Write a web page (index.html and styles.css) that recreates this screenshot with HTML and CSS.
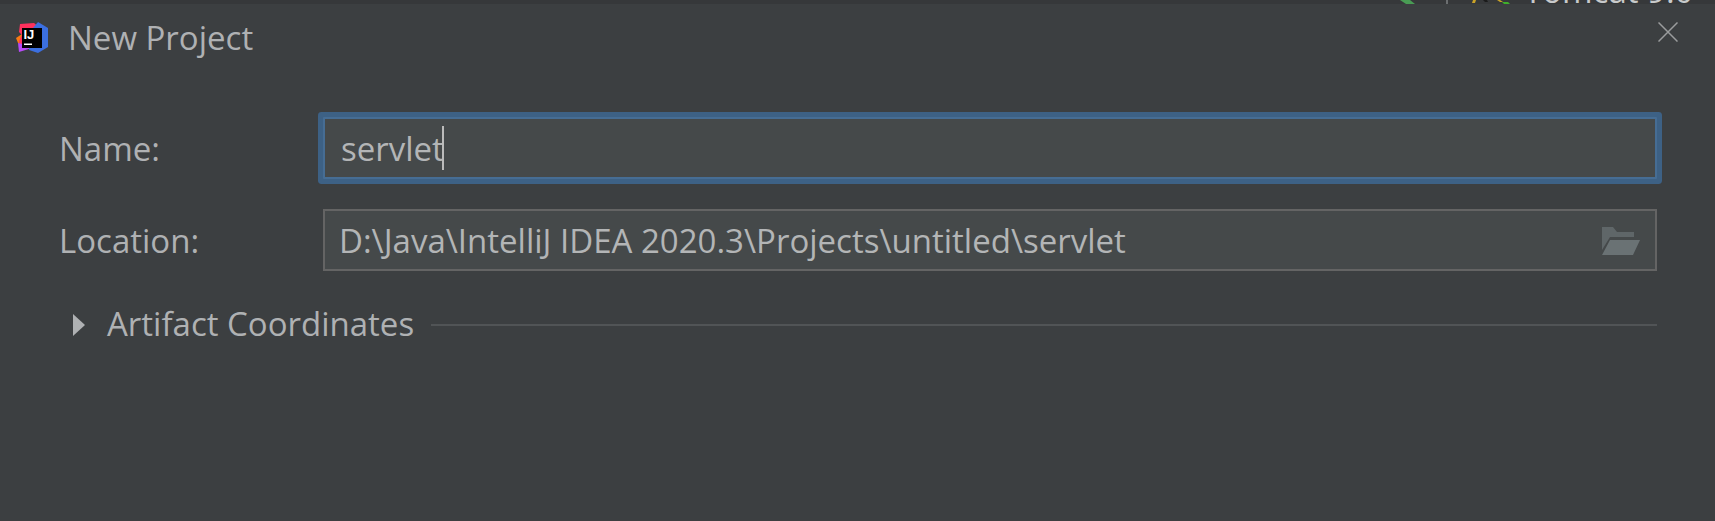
FILE: index.html
```html
<!DOCTYPE html>
<html lang="en">
<head>
    <meta charset="UTF-8">
    <title>New Project</title>
    <link rel="stylesheet" href="styles.css">
</head>
<body>
    <div class="behind">
        <svg class="behind-icons" width="120" height="4" viewBox="0 0 120 4">
            <path d="M0 0h10l5 4H6z" fill="#499c54"/>
            <rect x="46" y="0" width="2" height="4" fill="#6b6e70"/>
            <path d="M73 0h3l-1 3h-3z" fill="#c9a227"/>
            <path d="M83 0h4l1 2h-3z" fill="#1b1b1b"/>
            <path d="M97 0h3l3 2h-3z" fill="#c9a227"/>
            <path d="M102 2h6l2 2h-6z" fill="#3fae2a"/>
        </svg>
        <span class="behind-text">Tomcat 9.0</span>
    </div>
    <div class="dialog">
        <div class="title-bar">
            <svg class="logo" width="32" height="32" viewBox="0 0 32 32">
                <path d="M0 16l6-4v10l-4-1z" fill="#f97a12"/>
                <path d="M4 2l14-1 6 5-8 18-12 3-1-8 3-6-3-3z" fill="#fe315d"/>
                <path d="M3 30l-1-9 9 2 5 3z" fill="#b74af7"/>
                <path d="M22 0l10 6v19l-10 6-9-3 4-22z" fill="#3b6fe0"/>
                <rect x="6" y="6" width="20" height="20" fill="#000"/>
                <rect x="8" y="21.500" width="8" height="1.500" fill="#fff"/>
                <text class="logo-text" x="7.500" y="17">IJ</text>
            </svg>
            <span class="title">New Project</span>
            <svg class="close" width="20" height="20" viewBox="0 0 20 20">
                <path d="M.5.500l19 19M19.500.500l-19 19" stroke="#9a9c9d" stroke-width="1.500" fill="none"/>
            </svg>
        </div>
        <div class="form">
            <div class="form-row">
                <label class="form-label">Name:</label>
                <div class="field field-focus">
                    <span class="field-text">servlet</span><span class="caret"></span>
                </div>
            </div>
            <div class="form-row">
                <label class="form-label">Location:</label>
                <div class="field">
                    <span class="field-text">D:\Java\IntelliJ IDEA 2020.3\Projects\untitled\servlet</span>
                    <svg class="folder" width="38" height="28" viewBox="0 0 38 28">
                        <path d="M0 0h11l4 5h17v5H8L0 23z" fill="#5f6668"/>
                        <path d="M8 13h30l-7 15H0z" fill="#6a7274"/>
                    </svg>
                </div>
            </div>
            <div class="artifact">
                <span class="arrow"></span>
                <span class="artifact-title">Artifact Coordinates</span>
                <span class="artifact-line"></span>
            </div>
        </div>
    </div>
</body>
</html>
```

FILE: styles.css
```css
html, body {
    margin: 0;
    padding: 0;
    height: 521px;
    overflow: hidden;
}
body {
    font-family: "Open Sans", "Noto Sans", sans-serif;
    background-color: #3c3f41;
    color: #afb1b3;
    display: flex;
    flex-direction: column;
}
.behind {
    height: 4px;
    flex-shrink: 0;
    background-color: #36383a;
    display: flex;
    overflow: hidden;
    padding-left: 1400px;
    position: relative;
}
.behind-icons {
    flex-shrink: 0;
}
.behind-text {
    position: absolute;
    left: 1524px;
    top: -26px;
    font-size: 33px;
    line-height: 34px;
    color: #c8cacb;
}
.dialog {
    flex: 1;
    display: flex;
    flex-direction: column;
}
.title-bar {
    display: flex;
    align-items: center;
    height: 68px;
    padding: 0 37px 0 16px;
}
.logo {
    flex-shrink: 0;
    margin-right: 20px;
}
.logo-text {
    font-family: "Liberation Sans", sans-serif;
    font-size: 13px;
    font-weight: 700;
    fill: #fff;
}
.title {
    font-size: 33px;
    line-height: 68px;
    flex: 1;
}
.close {
    flex-shrink: 0;
    margin-top: -12px;
}
.form {
    padding: 45px 58px 0 59px;
    display: flex;
    flex-direction: column;
    gap: 30px;
}
.form-row {
    display: flex;
    align-items: center;
}
.form-label {
    width: 264px;
    flex-shrink: 0;
    font-size: 33px;
}
.field {
    flex: 1;
    height: 62px;
    box-sizing: border-box;
    border: 2px solid #646464;
    background-color: #45494a;
    display: flex;
    align-items: center;
    padding-left: 14px;
    font-size: 33px;
    position: relative;
}
.field-focus {
    border-color: #466d94;
    border-radius: 1px;
    box-shadow: 0 0 0 5px #3d6185;
    padding-left: 16px;
}
.field-text {
    color: #b3b5b6;
}
.caret {
    display: block;
    width: 2px;
    height: 44px;
    background-color: #bbbbbb;
    margin-left: -2px;
}
.folder {
    position: absolute;
    right: 15px;
    top: 16px;
}
.artifact {
    display: flex;
    align-items: center;
    margin-top: -6px;
    height: 60px;
}
.arrow {
    width: 0;
    height: 0;
    border-left: 12px solid #afb1b3;
    border-top: 11px solid transparent;
    border-bottom: 11px solid transparent;
    margin-left: 14px;
    margin-right: 22px;
}
.artifact-title {
    font-size: 33px;
    padding-bottom: 4px;
}
.artifact-line {
    display: block;
    flex: 1;
    height: 2px;
    background-color: #515456;
    margin-left: 17px;
}
```
